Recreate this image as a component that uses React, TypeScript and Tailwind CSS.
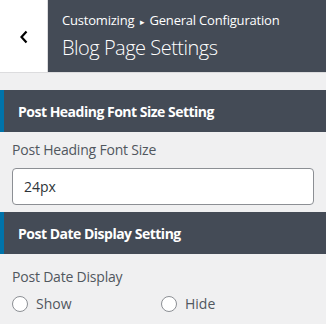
export default function App() {
  return (
    <div className="h-[324px] w-[326px] overflow-hidden bg-[#f0f0f1] font-['Open_Sans',sans-serif]">
      <header className="flex h-[73px] border-b border-[#dcdcde] bg-white">
        <button className="flex w-[48px] items-center justify-center border-r border-[#dcdcde] text-black">
          <svg width="10" height="14" viewBox="0 0 10 14" fill="none" className="mt-[1px]">
            <path d="M7.5 1.5 L2.5 7 L7.5 12.5" stroke="currentColor" strokeWidth="2.2" />
          </svg>
        </button>
        <div className="flex flex-1 flex-col justify-center bg-[#444b56] pl-[14px] text-white">
          <p className="text-[13px] leading-[18px] tracking-[-0.2px]">
            Customizing <span className="mx-[2px] text-[9px]">▸</span> General Configuration
          </p>
          <h1 className="mt-[4px] text-[20px] font-light leading-[26px] tracking-[-0.5px]">
            Blog Page Settings
          </h1>
        </div>
      </header>

      <section className="mt-[17px]">
        <h2 className="flex h-[42px] items-center border-l-4 border-[#0073aa] bg-[#444b56] pl-[14px] text-[14px] font-bold tracking-[-0.5px] text-white">
          Post Heading Font Size Setting
        </h2>
        <div className="px-[12px] pt-[8px]">
          <label className="block text-[14px] leading-[20px] tracking-[-0.2px] text-[#50575e]">
            Post Heading Font Size
          </label>
          <input
            type="text"
            defaultValue="24px"
            className="mt-[8px] h-[37px] w-full rounded-[4px] border border-[#8c8f94] bg-white px-[11px] text-[14px] text-[#2c3338] outline-none"
          />
        </div>
      </section>

      <section className="mt-[7px]">
        <h2 className="flex h-[42px] items-center border-l-4 border-[#0073aa] bg-[#444b56] pl-[14px] text-[14px] font-bold tracking-[-0.5px] text-white">
          Post Date Display Setting
        </h2>
        <div className="px-[12px] pt-[13px]">
          <p className="text-[14px] leading-[20px] tracking-[-0.2px] text-[#50575e]">Post Date Display</p>
          <div className="mt-[6px] flex">
            <label className="flex w-[149px] items-center gap-[8px] text-[14px] text-[#50575e]">
              <span className="h-[16px] w-[16px] rounded-full border border-[#8c8f94] bg-white" />
              Show
            </label>
            <label className="flex items-center gap-[8px] text-[14px] text-[#50575e]">
              <span className="h-[16px] w-[16px] rounded-full border border-[#8c8f94] bg-white" />
              Hide
            </label>
          </div>
        </div>
      </section>
    </div>
  );
}
